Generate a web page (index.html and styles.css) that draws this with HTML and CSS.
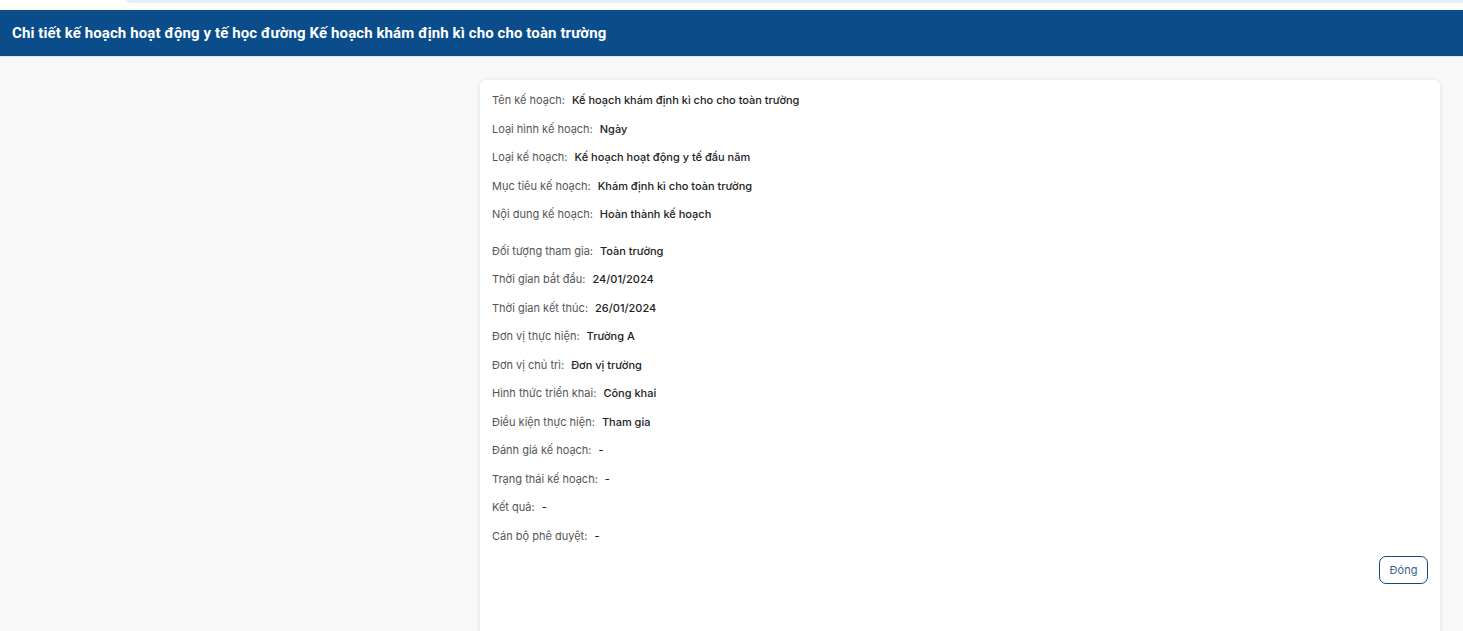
FILE: index.html
```html
<!DOCTYPE html>
<html lang="vi">
<head>
<meta charset="utf-8">
<link rel="stylesheet" href="styles.css">
</head>
<body>
<div class="topbar"><div class="topbar-strip"></div></div>
<header class="header">
  <h1 class="title">Chi tiết kế hoạch hoạt động y tế học đường Kế hoạch khám định kì cho cho toàn trường</h1>
</header>
<main class="main">
  <section class="card">
    <div class="group">
      <div class="row"><span class="label">Tên kế hoạch:</span><span class="value">Kế hoạch khám định kì cho cho toàn trường</span></div>
      <div class="row"><span class="label">Loại hình kế hoạch:</span><span class="value">Ngày</span></div>
      <div class="row"><span class="label">Loại kế hoạch:</span><span class="value">Kế hoạch hoạt động y tế đầu năm</span></div>
      <div class="row"><span class="label">Mục tiêu kế hoạch:</span><span class="value">Khám định kì cho toàn trường</span></div>
      <div class="row"><span class="label">Nội dung kế hoạch:</span><span class="value">Hoàn thành kế hoạch</span></div>
    </div>
    <div class="group group-second">
      <div class="row"><span class="label">Đối tượng tham gia:</span><span class="value">Toàn trường</span></div>
      <div class="row"><span class="label">Thời gian bắt đầu:</span><span class="value">24/01/2024</span></div>
      <div class="row"><span class="label">Thời gian kết thúc:</span><span class="value">26/01/2024</span></div>
      <div class="row"><span class="label">Đơn vị thực hiện:</span><span class="value">Trường A</span></div>
      <div class="row"><span class="label">Đơn vị chủ trì:</span><span class="value">Đơn vị trường</span></div>
      <div class="row"><span class="label">Hình thức triển khai:</span><span class="value">Công khai</span></div>
      <div class="row"><span class="label">Điều kiện thực hiện:</span><span class="value">Tham gia</span></div>
      <div class="row"><span class="label">Đánh giá kế hoạch:</span><span class="value">-</span></div>
      <div class="row"><span class="label">Trạng thái kế hoạch:</span><span class="value">-</span></div>
      <div class="row"><span class="label">Kết quả:</span><span class="value">-</span></div>
      <div class="row"><span class="label">Cán bộ phê duyệt:</span><span class="value">-</span></div>
    </div>
    <div class="actions"><button class="btn-close" type="button">Đóng</button></div>
  </section>
</main>
</body>
</html>
```
FILE: styles.css
```css
* { box-sizing: border-box; }
html, body { margin: 0; padding: 0; }
body {
  background: #f8f8f8;
  font-family: Inter, "Noto Sans", sans-serif;
  height: 631px;
  overflow: hidden;
}
.topbar {
  height: 10px;
  background: #ffffff;
  padding-left: 126px;
}
.topbar-strip {
  height: 3px;
  background: #eceef7;
  border-bottom-left-radius: 8px;
}
.header {
  height: 47px;
  background: #0a4d8a;
  display: flex;
  align-items: center;
  padding-left: 12px;
  border-bottom: 1px solid #e3e3e3;
}
.title {
  margin: 0;
  color: #ffffff;
  font-family: Roboto, "Liberation Sans", sans-serif;
  font-size: 15px;
  font-weight: 700;
  letter-spacing: 0.1px;
}
.main {
  padding: 23px 23px 0 480px;
  height: 574px;
  overflow: hidden;
}
.card {
  background: #ffffff;
  border-radius: 6px;
  box-shadow: 0 0 4px rgba(0,0,0,0.1);
  padding: 6px 12px 0 12px;
  height: 600px;
}
.group-second { margin-top: 8px; }
.row {
  height: 28.5px;
  display: flex;
  align-items: center;
  font-size: 11px;
}
.label {
  color: #555555;
  font-weight: 400;
  margin-right: 7px;
}
.value {
  color: #222222;
  font-weight: 500;
}
.actions {
  display: flex;
  justify-content: flex-end;
  padding-top: 6px;
}
.btn-close {
  height: 28px;
  padding: 0;
  background: #ffffff;
  border: 1px solid #0a4d8a;
  border-radius: 7px;
  color: #3a5f8f;
  font-family: Inter, "Noto Sans", sans-serif;
  font-size: 11px;
  width: 49px;
}
```
